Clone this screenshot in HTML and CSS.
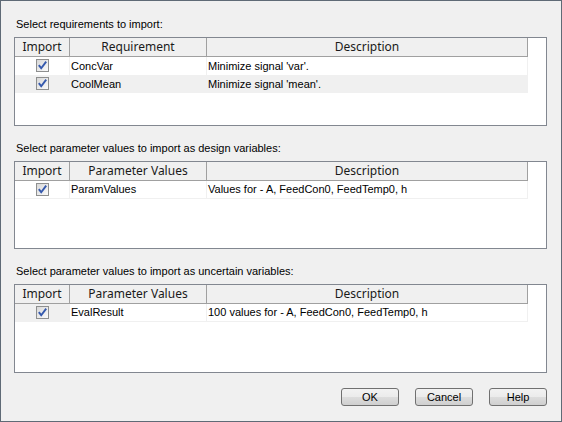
FILE: index.html
```html
<!DOCTYPE html>
<html>
<head>
<meta charset="utf-8">
<link rel="stylesheet" href="styles.css">
</head>
<body>
<div class="window">
  <div class="section s1">
    <div class="label">Select requirements to import:</div>
    <div class="tbox h89">
      <div class="grid">
        <div class="hc">Import</div>
        <div class="hc">Requirement</div>
        <div class="hc">Description</div>

        <div class="rc chk"><span class="cb"><svg width="13" height="13" viewBox="0 0 13 13"><path d="M2.8 6.2 L5.2 9.2 L10.2 2.6" fill="none" stroke="#3559ad" stroke-width="1.9"/></svg></span></div>
        <div class="rc">ConcVar</div>
        <div class="rc">Minimize signal 'var'.</div>

        <div class="rc chk alt"><span class="cb"><svg width="13" height="13" viewBox="0 0 13 13"><path d="M2.8 6.2 L5.2 9.2 L10.2 2.6" fill="none" stroke="#3559ad" stroke-width="1.9"/></svg></span></div>
        <div class="rc alt">CoolMean</div>
        <div class="rc alt">Minimize signal 'mean'.</div>
      </div>
    </div>
  </div>

  <div class="section s2">
    <div class="label">Select parameter values to import as design variables:</div>
    <div class="tbox h88">
      <div class="grid">
        <div class="hc">Import</div>
        <div class="hc">Parameter Values</div>
        <div class="hc">Description</div>

        <div class="rc chk line"><span class="cb"><svg width="13" height="13" viewBox="0 0 13 13"><path d="M2.8 6.2 L5.2 9.2 L10.2 2.6" fill="none" stroke="#3559ad" stroke-width="1.9"/></svg></span></div>
        <div class="rc line">ParamValues</div>
        <div class="rc line">Values for - A, FeedCon0, FeedTemp0, h</div>
      </div>
    </div>
  </div>

  <div class="section s3">
    <div class="label">Select parameter values to import as uncertain variables:</div>
    <div class="tbox h89">
      <div class="grid">
        <div class="hc">Import</div>
        <div class="hc">Parameter Values</div>
        <div class="hc">Description</div>

        <div class="rc chk line focus"><span class="cb"><svg width="13" height="13" viewBox="0 0 13 13"><path d="M2.8 6.2 L5.2 9.2 L10.2 2.6" fill="none" stroke="#3559ad" stroke-width="1.9"/></svg></span></div>
        <div class="rc line">EvalResult</div>
        <div class="rc line">100 values for - A, FeedCon0, FeedTemp0, h</div>
      </div>
    </div>
  </div>

  <div class="buttons">
    <div class="btn">OK</div>
    <div class="btn">Cancel</div>
    <div class="btn">Help</div>
  </div>
</div>
</body>
</html>
```

FILE: styles.css
```css
html, body {
  margin: 0;
  padding: 0;
  background: #f0f0f0;
}

.window {
  width: 562px;
  height: 422px;
  box-sizing: border-box;
  border: 1px solid #5f6a76;
  background: #f0f0f0;
  padding: 16px 14px 0 13px;
  font-family: "Liberation Sans", Arial, sans-serif;
  font-size: 11px;
  color: #000;
}

.label {
  height: 14px;
  line-height: 14px;
  padding-left: 2px;
  margin-bottom: 6px;
  white-space: nowrap;
}

.s2 { margin-top: 15px; }
.s3 { margin-top: 15px; }

.tbox {
  box-sizing: border-box;
  width: 533px;
  border: 1px solid #828790;
  background: #fff;
}
.h89 { height: 89px; }
.h88 { height: 88px; }

.grid {
  display: grid;
  grid-template-columns: 55px 137px 321px;
}

.hc {
  box-sizing: border-box;
  height: 19px;
  line-height: 17px;
  background: #f0f0f0;
  border-right: 1px solid #a0a0a0;
  border-bottom: 1px solid #a0a0a0;
  text-align: center;
  font-family: "Noto Sans", "Open Sans", sans-serif;
  font-size: 12px;
  color: #1a1a1a;
}

.rc {
  box-sizing: border-box;
  height: 18px;
  line-height: 18px;
  padding-left: 1px;
  border-right: 1px solid #f0f0f0;
  white-space: nowrap;
  overflow: hidden;
}

.rc.alt { background: #f0f0f0; }
.rc.line { border-bottom: 1px solid #f0f0f0; line-height: 17px; }
.rc.focus { background: #f0f0f0; }

.chk {
  display: flex;
  justify-content: center;
  align-items: flex-start;
  padding: 2px 0 0 0;
}

.cb {
  box-sizing: border-box;
  width: 13px;
  height: 13px;
  border: 1px solid #8e8f8f;
  background: linear-gradient(135deg, #d8d8d8 0%, #f2f2f2 75%, #fafafa 100%);
  display: block;
  position: relative;
}
.cb svg {
  position: absolute;
  left: -1px;
  top: -1px;
}

.buttons {
  display: flex;
  justify-content: flex-end;
  gap: 16px;
  margin-top: 15px;
}

.btn {
  box-sizing: border-box;
  width: 58px;
  height: 18px;
  border: 1px solid #707070;
  border-radius: 3px;
  background: linear-gradient(#f2f2f2 0%, #ebebeb 50%, #dddddd 51%, #cfcfcf 100%);
  text-align: center;
  line-height: 16px;
  font-size: 11px;
}
```
